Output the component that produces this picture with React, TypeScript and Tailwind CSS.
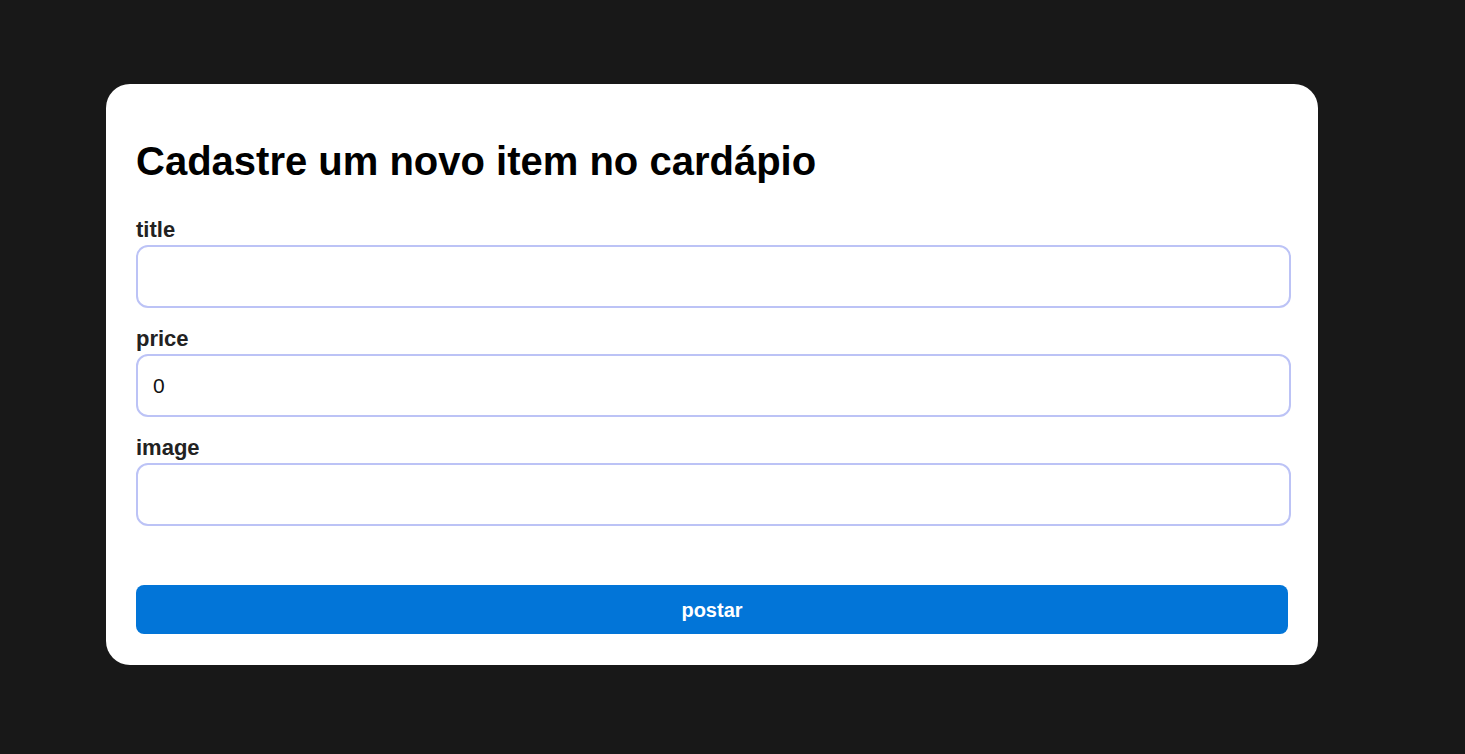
import React, {useState} from 'react';

interface FieldProps {
    label: string;
    value: string;
    onChange: (v: string) => void;
}

const Field: React.FC<FieldProps> = ({ label, value, onChange }) => {
    return (
        <div className="flex flex-col mb-[18px]">
            <label className="text-[22px] leading-[25px] font-bold text-[#222222] mb-[3px]">{label}</label>
            <input
                value={value}
                onChange={(e) => onChange(e.target.value)}
                className="w-[1155px] h-[63px] rounded-[12px] border-2 border-[#bcc3f6] bg-white px-[15px] text-[21px] text-[#111111] outline-none"
            />
        </div>
    );
};

const App: React.FC = () => {
    const [title, setTitle] = useState('');
    const [price, setPrice] = useState('0');
    const [image, setImage] = useState('');

    return (
        <div className="min-h-[754px] w-full bg-[#181818] pt-[84px] pl-[106px] font-['Liberation_Sans',Arial,sans-serif]">
            <div className="w-[1212px] h-[581px] bg-white rounded-[24px] px-[30px] pt-[30px] pb-[31px] flex flex-col">
                <h1 className="text-[40px] leading-[46px] font-bold text-black mt-[24px] mb-[33px]">
                    Cadastre um novo item no cardápio
                </h1>
                <Field label="title" value={title} onChange={setTitle}/>
                <Field label="price" value={price} onChange={setPrice}/>
                <Field label="image" value={image} onChange={setImage}/>
                <button className="mt-[41px] w-[1152px] h-[49px] rounded-[8px] bg-[#0275d8] text-white text-[20px] font-bold">
                    postar
                </button>
            </div>
        </div>
    );
};

export default App;
